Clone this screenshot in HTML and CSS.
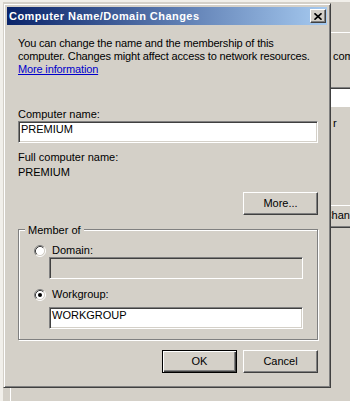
FILE: index.html
```html
<!DOCTYPE html>
<html lang="en">
<head>
<meta charset="utf-8">
<title>Computer Name/Domain Changes</title>
<link rel="stylesheet" href="styles.css">
</head>
<body>
  <div class="bgwin">
    <div class="tabpage">
      <div class="tabcol">
        <div class="bg-text1">computer</div>
        <div class="bg-edit"></div>
        <div class="bg-text2">r</div>
        <div class="bg-btn">Change...</div>
      </div>
    </div>
  </div>

  <div class="dialog">
    <div class="titlebar">
      <span class="title">Computer Name/Domain Changes</span>
      <div class="close">
        <svg width="8" height="7" viewBox="0 0 8 7"><path d="M0.5 0.3 L7.5 6.7 M7.5 0.3 L0.5 6.7" stroke="#000" stroke-width="1.6" fill="none"/></svg>
      </div>
    </div>
    <div class="client">
      <p class="intro">You can change the name and the membership of this<br>computer. Changes might affect access to network resources.<br><a class="link" href="#">More information</a></p>

      <div class="label-cn">Computer name:</div>
      <div class="field">PREMIUM</div>

      <div class="full-label">Full computer name:</div>
      <div class="full-value">PREMIUM</div>

      <div class="more-row"><div class="btn">More...</div></div>

      <div class="group">
        <span class="legend">Member of</span>
        <div class="radio-row">
          <svg class="radio" width="12" height="12" viewBox="0 0 12 12">
            <circle cx="6" cy="6" r="4.5" fill="#fff"/>
            <path d="M9.89 2.11 A5.5 5.5 0 0 0 2.11 9.89" stroke="#808080" fill="none"/>
            <path d="M2.11 9.89 A5.5 5.5 0 0 0 9.89 2.11" stroke="#fff" fill="none"/>
            <path d="M9.18 2.82 A4.5 4.5 0 0 0 2.82 9.18" stroke="#404040" fill="none"/>
            <path d="M2.82 9.18 A4.5 4.5 0 0 0 9.18 2.82" stroke="#d4d0c8" fill="none"/>
          </svg>
          <span>Domain:</span>
        </div>
        <div class="field sub disabled"></div>
        <div class="radio-row second">
          <svg class="radio" width="12" height="12" viewBox="0 0 12 12">
            <circle cx="6" cy="6" r="4.5" fill="#fff"/>
            <path d="M9.89 2.11 A5.5 5.5 0 0 0 2.11 9.89" stroke="#808080" fill="none"/>
            <path d="M2.11 9.89 A5.5 5.5 0 0 0 9.89 2.11" stroke="#fff" fill="none"/>
            <path d="M9.18 2.82 A4.5 4.5 0 0 0 2.82 9.18" stroke="#404040" fill="none"/>
            <path d="M2.82 9.18 A4.5 4.5 0 0 0 9.18 2.82" stroke="#d4d0c8" fill="none"/>
            <circle cx="6" cy="6" r="2" fill="#000"/>
          </svg>
          <span>Workgroup:</span>
        </div>
        <div class="field sub wg">WORKGROUP</div>
      </div>

      <div class="actions">
        <div class="btn default">OK</div>
        <div class="btn">Cancel</div>
      </div>
    </div>
  </div>
</body>
</html>
```

FILE: styles.css
```css
* { box-sizing: border-box; }
html, body { margin: 0; padding: 0; }
body {
  width: 350px;
  height: 401px;
  overflow: hidden;
  position: relative;
  background: #d4d0c8;
  font-family: "Liberation Sans", Arial, sans-serif;
  font-size: 11px;
  line-height: 13px;
  color: #000;
}

/* background window (System Properties) */
.bgwin {
  position: absolute;
  left: 0; top: 0; right: 0; bottom: 0;
  border-top: 2px solid #f1efea;
  border-left: 3px solid #f1efea;
  padding: 30px 0 0 7px;
}
.tabpage {
  height: 100%;
  border-top: 1px solid #fff;
  border-left: 1px solid #fff;
  display: flex;
  justify-content: flex-end;
}
.tabcol {
  width: 19px;
  padding-left: 2px;
  white-space: nowrap;
  overflow: hidden;
}
.bg-text1 { margin-top: 17px; }
.bg-edit {
  margin-top: 24px;
  margin-left: -2px;
  width: 40px;
  height: 20px;
  background: #fff;
  border-top: 1px solid #808080;
  border-bottom: 1px solid #fff;
  box-shadow: inset 0 1px #404040;
}
.bg-text2 { margin-top: 10px; }
.bg-btn {
  margin-top: 75px;
  margin-left: -23px;
  width: 75px;
  height: 23px;
  line-height: 19px;
  text-align: center;
  border: 1px solid;
  border-color: #fff #404040 #404040 #fff;
  box-shadow: inset -1px -1px #808080;
}

/* dialog window */
.dialog {
  position: absolute;
  left: 3px;
  top: 3px;
  width: 328px;
  height: 385px;
  background: #d4d0c8;
  border: 1px solid;
  border-color: #d4d0c8 #404040 #404040 #d4d0c8;
  box-shadow: inset 1px 1px #fff, inset -1px -1px #808080;
  padding: 3px;
  display: flex;
  flex-direction: column;
}
.titlebar {
  height: 18px;
  flex: none;
  display: flex;
  align-items: center;
  justify-content: space-between;
  background: linear-gradient(to right, #0a246a, #a6caf0);
  padding: 0 1px 0 2px;
}
.title {
  color: #fff;
  font-weight: bold;
  letter-spacing: 0.45px;
  line-height: 18px;
  white-space: nowrap;
}
.close {
  width: 16px;
  height: 14px;
  background: #d4d0c8;
  border: 1px solid;
  border-color: #fff #404040 #404040 #fff;
  box-shadow: inset -1px -1px #808080;
  display: flex;
  align-items: center;
  justify-content: center;
}
.close svg { display: block; }

.client {
  padding: 12px 9px 0 11px;
}
.intro {
  margin: 0;
  white-space: nowrap;
  letter-spacing: -0.15px;
}
.link {
  color: #0000cc;
  text-decoration: underline;
}
.label-cn { margin-top: 32px; }
.field {
  height: 22px;
  background: #fff;
  border: 1px solid;
  border-color: #808080 #fff #fff #808080;
  box-shadow: inset 1px 1px #404040, inset -1px -1px #d4d0c8;
  padding: 1px 3px 0 2px;
  white-space: nowrap;
}
.field.disabled { background: #d4d0c8; }
.full-label { margin-top: 8px; }
.full-value { margin-top: 2px; }

.more-row {
  margin-top: 13px;
  display: flex;
  justify-content: flex-end;
}
.btn {
  width: 75px;
  height: 23px;
  line-height: 21px;
  text-align: center;
  background: #d4d0c8;
  border: 1px solid;
  border-color: #fff #404040 #404040 #fff;
  box-shadow: inset -1px -1px #808080;
}
.btn.default {
  border-color: #000;
  box-shadow: inset 1px 1px #fff, inset -1px -1px #404040, inset -2px -2px #808080;
}

.group {
  position: relative;
  margin-top: 14px;
  border: 1px solid #808080;
  box-shadow: inset 1px 1px #fff, 1px 1px #fff;
  padding: 14px 14px 10px 15px;
}
.legend {
  position: absolute;
  top: -6px;
  left: 6px;
  padding: 0 3px;
  background: #d4d0c8;
  white-space: nowrap;
}
.radio-row {
  height: 13px;
  display: flex;
  align-items: center;
  gap: 6px;
}
.radio-row.second { margin-top: 9px; }
.radio { display: block; flex: none; }
.field.sub {
  margin-left: 15px;
  width: 254px;
}
.field.wg { margin-top: 6px; }

.actions {
  margin-top: 10px;
  display: flex;
  justify-content: flex-end;
  gap: 6px;
}
```
